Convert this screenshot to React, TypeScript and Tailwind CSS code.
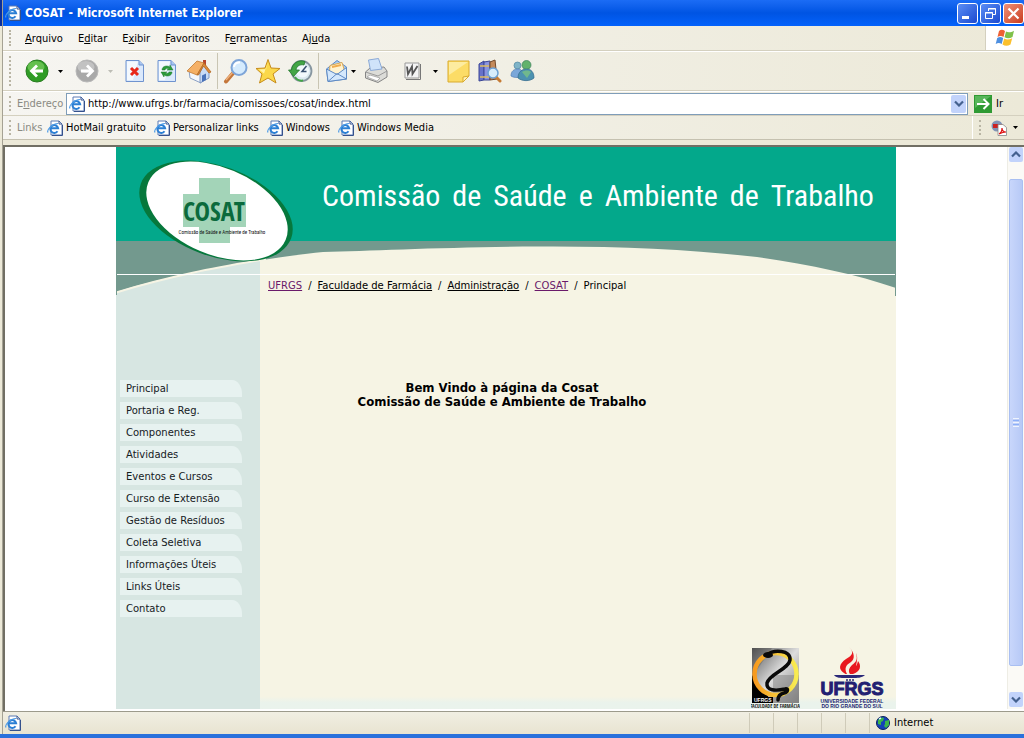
import React from "react";

const menus = [
  ["", "A", "rquivo"],
  ["E", "d", "itar"],
  ["E", "x", "ibir"],
  ["", "F", "avoritos"],
  ["F", "e", "rramentas"],
  ["Aj", "u", "da"],
];

const bookmarks = ["HotMail gratuito", "Personalizar links", "Windows", "Windows Media"];

const sections = [
  "Principal",
  "Portaria e Reg.",
  "Componentes",
  "Atividades",
  "Eventos e Cursos",
  "Curso de Extensão",
  "Gestão de Resíduos",
  "Coleta Seletiva",
  "Informações Úteis",
  "Links Úteis",
  "Contato",
];

function IePage() {
  return (
    <svg width="16" height="16" viewBox="0 0 16 16" className="shrink-0">
      <path d="M4 1h8l3 3v11H4z" fill="#fff" stroke="#5b7bb5" />
      <path d="M12 1v3h3M15.5 5v10.5H5" fill="none" stroke="#35518c" />
      <path d="M10.5 11.2a3.9 3.9 0 1 1 .6-3H4" fill="none" stroke="#2b7fd4" strokeWidth="2" />
      <path d="M1 12.500C-.5 10 5 3.500 11 3.500" fill="none" stroke="#4d9be6" strokeWidth="1.200" />
    </svg>
  );
}

function Grip() {
  return <span className="mx-1.5 w-0.5 shrink-0 self-stretch my-1 border-l-2 border-dotted border-[#b9b5a4]" />;
}

function Caret({ color = "#000" }: { color?: string }) {
  return (
    <svg width="5" height="3" viewBox="0 0 5 3">
      <path d="M0 0h5L2.500 3z" fill={color} />
    </svg>
  );
}

function Chevron({ up = false }: { up?: boolean }) {
  return (
    <svg width="10" height="7" viewBox="0 0 10 7">
      <path d={up ? "M1 5.500 5 1.500l4 4" : "M1 1.500l4 4 4-4"} fill="none" stroke="#44618f" strokeWidth="2.200" />
    </svg>
  );
}

function RoundArrow({ back = false }: { back?: boolean }) {
  return (
    <svg width="24" height="24" viewBox="0 0 24 24">
      <circle cx="12" cy="12" r="11" fill={back ? "#2f9c25" : "#a9a9a9"} stroke={back ? "#2a7d22" : "#b9b9b9"} />
      <ellipse cx="11" cy="8" rx="8.500" ry="6" fill={back ? "#7ad05f" : "#cdcdcd"} opacity=".7" />
      <path
        d={back ? "M18 12H7M12 6.500 6.500 12l5.500 5.500" : "M6 12h11M12 6.500l5.500 5.500-5.500 5.500"}
        fill="none"
        stroke="#fff"
        strokeWidth="2.800"
      />
    </svg>
  );
}

function Sheet({ children }: { children: React.ReactNode }) {
  return (
    <svg width="22" height="24" viewBox="0 0 22 24">
      <path d="M2 1.500h13l4.500 4.500v16.500H2z" fill="#dbe9fc" stroke="#6f93cf" />
      <path d="M3 2.500h11L9 21H3z" fill="#fff" opacity=".7" />
      <path d="M15 1.500V6h4.500" fill="#a9c6f2" stroke="#6f93cf" />
      {children}
    </svg>
  );
}

function HomeIcon() {
  return (
    <svg width="26" height="26" viewBox="0 0 26 26">
      <path d="M17 2h3v7h-3z" fill="#b8442c" />
      <path d="M3 12 11 6l4 8v11L4 20z" fill="#f4f7fd" stroke="#8ba0c4" />
      <path d="M14 14v11l9-5v-8l-5-5z" fill="#c9dbf5" stroke="#7f98c4" />
      <path d="M1 13 11 3l7 2-7 12z" fill="#f5b066" stroke="#c27a32" strokeWidth=".8" />
      <path d="M18 5l7 9-2 1-5.500-7-5 9-1.500 0z" fill="#dd8a3a" stroke="#b36a25" strokeWidth=".8" />
      <path d="M16 17.500l4-2V22l-4 2z" fill="#4a72b8" />
    </svg>
  );
}

function SearchIcon() {
  return (
    <svg width="26" height="26" viewBox="0 0 26 26">
      <path d="M3 23.500 11 14" stroke="#c4763a" strokeWidth="4" strokeLinecap="round" />
      <path d="M3 22 10 14" stroke="#efb27c" strokeWidth="1.300" />
      <circle cx="16" cy="9.500" r="7.500" fill="#d5ebfd" stroke="#7ea5d8" strokeWidth="2" />
      <path d="M11 9a5 5 0 0 1 6-4.500" fill="none" stroke="#fff" strokeWidth="2" />
    </svg>
  );
}

function StarIcon() {
  return (
    <svg width="26" height="26" viewBox="0 0 26 26">
      <path
        d="M13 1.500 16 10l9 .5-7 5.500 3 9-8-5-8.500 5L7 16 1 10.500 10 10z"
        fill="#fbd84a"
        stroke="#c78c1a"
        strokeLinejoin="round"
      />
      <path d="M13 4l-2 7-7 .5 5 4z" fill="#fff3a8" />
    </svg>
  );
}

function HistoryIcon() {
  return (
    <svg width="26" height="26" viewBox="0 0 26 26">
      <circle cx="14.500" cy="13" r="10" fill="#dbe9f0" stroke="#8796a0" strokeWidth="1.800" />
      <circle cx="15.500" cy="13" r="6.500" fill="#f2f9fd" />
      <path d="M19.500 8 15 13.500h4.500" fill="none" stroke="#38506f" strokeWidth="1.500" />
      <path d="M18 3.500C11 1 5 6 4.500 12H1.500l5 6.500 6-6.500H9c.5-4 4-6 8-5z" fill="#43a647" stroke="#25772f" strokeWidth=".8" />
      <path d="M8 19c2 3 5 4 8 3.500" fill="none" stroke="#43a647" strokeWidth="2" />
    </svg>
  );
}

function MailIcon() {
  return (
    <svg width="24" height="24" viewBox="0 0 24 24">
      <path d="M1.500 10 12 1.500 21.500 8v12L3 22.500z" fill="#a9cdf2" stroke="#5e8ac4" />
      <path d="M5 6.500l12-3 2.500 8-8 5-7-4z" fill="#fff3d0" stroke="#dca850" />
      <path d="M7 8l9-2" stroke="#f0ad4e" strokeWidth="2" />
      <path d="M1.500 10 12 15.500l9.500-7V20L3 22.500z" fill="#d4e8fc" stroke="#5e8ac4" />
      <path d="M3 22.500l9-8 9.500 5.500" fill="none" stroke="#5e8ac4" />
    </svg>
  );
}

function PrinterIcon() {
  return (
    <svg width="24" height="26" viewBox="0 0 24 26">
      <path d="M1.500 14 6 10l14-1 3 4v6l-9 5.500L1.500 20z" fill="#dcdcd8" stroke="#858585" />
      <path d="M6.500 12.500 4.500 2l10-1.500L18 11z" fill="#cfe3fa" stroke="#8aa9d6" />
      <path d="M1.500 14 14 18l9-5" fill="none" stroke="#9a9a9a" />
      <path d="M3 19l3-2 10 3-3 3z" fill="#fff" stroke="#999" strokeWidth=".7" />
    </svg>
  );
}

function WordIcon() {
  return (
    <svg width="17" height="18" viewBox="0 0 17 18">
      <path d="M1 1h14v15H1z" fill="#f4f4f4" stroke="#999" />
      <path d="M16.500 2v15.500H2" fill="none" stroke="#777" />
      <path d="M3 4.500l1 7.500 4-7.500.5 7.500 5-8" fill="none" stroke="#555" strokeWidth="1.800" />
    </svg>
  );
}

function NoteIcon() {
  return (
    <svg width="23" height="23" viewBox="0 0 23 23">
      <path d="M1 1h21v15l-6 6H1z" fill="#fcdc66" stroke="#d9ab2e" />
      <path d="M2 2h19L2 15z" fill="#fdeca0" />
      <path d="M16 22v-5l6-1z" fill="#fff2b8" stroke="#d9ab2e" />
    </svg>
  );
}

function ResearchIcon() {
  return (
    <svg width="24" height="24" viewBox="0 0 24 24">
      <path d="M1 5l5-3v19l-5 1z" fill="#6772c9" stroke="#3c4796" />
      <path d="M6 3l6-1v19H6z" fill="#8a95e0" stroke="#3c4796" />
      <path d="M12 3l5-2 2 19-7 1z" fill="#c48a5a" stroke="#754a2b" />
      <path d="M2 7h9M2 18h9" stroke="#e0bd60" strokeWidth="1.500" />
      <path d="M18 18l4 4" stroke="#c67b34" strokeWidth="3" strokeLinecap="round" />
      <circle cx="15" cy="14" r="5" fill="#d7edfc" stroke="#6ba0d4" strokeWidth="1.500" />
    </svg>
  );
}

function MessengerIcon() {
  return (
    <svg width="25" height="22" viewBox="0 0 25 22">
      <circle cx="7.500" cy="5.500" r="3.500" fill="#7fb4c8" stroke="#4f87a0" strokeWidth=".7" />
      <path d="M1 16c0-5 3-7 7-7 3 0 5 2 5 7-3 2-9 2-12 0z" fill="#7aa7d9" stroke="#5580b5" strokeWidth=".7" />
      <circle cx="16.500" cy="5" r="4.500" fill="#62b26c" stroke="#3d7f5c" strokeWidth=".7" />
      <path d="M8 18c0-6 4-9 8.500-9s7.500 3 7.500 9c-4 3.500-12 3.500-16 0z" fill="#4c92b0" stroke="#32698c" strokeWidth=".7" />
      <path d="M12 12c3-2 7-2 9 0l-4 6z" fill="#79c285" opacity=".8" />
    </svg>
  );
}

function WindowsFlag() {
  return (
    <svg width="20" height="18" viewBox="0 0 20 18">
      <path d="M4 2c2-2 4-1.500 6 0L8.500 8c-2-1.500-4-1.500-6 0z" fill="#ee6034" />
      <path d="M11 2.500c2 1.200 5 1 8-.8L17.500 8c-3 1.500-5 1.500-8 .3z" fill="#7fc14b" />
      <path d="M2.200 9c2-1.500 4-1.500 6 0l-1.500 6c-2-1.500-4-1.500-6 0z" fill="#4d8fe0" />
      <path d="M9.200 9.500c2.500 1.500 5 1.200 8-.3L15.500 15.500c-3 1.700-5.500 1.500-8 0z" fill="#fbc02d" />
    </svg>
  );
}

function PdfIcon() {
  return (
    <svg width="16" height="16" viewBox="0 0 16 16">
      <circle cx="6" cy="6" r="5.500" fill="#8193b5" />
      <path d="M2 4h9v4H2z" fill="#c22" />
      <path d="M7 4.500h5l3.500 3v8H7z" fill="#fff" stroke="#888" strokeWidth=".8" />
      <path d="M8 14c2-1 3-4 3-6 0 3 2 4 4 4-3 0-5 1-7 2z" fill="none" stroke="#d11" strokeWidth="1.200" />
    </svg>
  );
}

function Globe() {
  return (
    <svg width="14" height="14" viewBox="0 0 14 14">
      <circle cx="7" cy="7" r="6.500" fill="#1440b8" stroke="#0a1f5c" />
      <path d="M2 4c2-3 5-3 6-2L7 5 5 6v3L2 8zM9 5l4-1v5l-3 3-2-2 1-2z" fill="#3bb54a" />
      <path d="M3 3l2-1" stroke="#d9f2ff" strokeWidth="1.500" />
    </svg>
  );
}

function ToolButton({ label, children }: { label: string; children: React.ReactNode }) {
  return (
    <button type="button" aria-label={label} className="flex h-8 w-8 shrink-0 items-center justify-center">
      {children}
    </button>
  );
}

function DropButton({ label, color }: { label: string; color?: string }) {
  return (
    <button type="button" aria-label={label} className="flex h-8 w-3.5 shrink-0 items-center justify-center">
      <Caret color={color} />
    </button>
  );
}

function TitleBar() {
  const box = "flex h-[21px] w-[21px] items-center justify-center rounded-[3px] border border-white";
  return (
    <header className="flex h-[26px] items-center bg-linear-to-b from-[#1b6cf5] via-[#0054e3] to-[#0462fb] pl-0.5">
      <IePage />
      <h1 className="ml-1 flex-1 text-[12px] font-bold text-white">COSAT - Microsoft Internet Explorer</h1>
      <div className="flex gap-0.5">
        <button type="button" aria-label="Minimizar" className={`${box} bg-linear-to-br from-[#5c8df5] to-[#1c48cf]`}>
          <svg width="13" height="13" viewBox="0 0 13 13">
            <path d="M1 9h7v3H1z" fill="#fff" />
          </svg>
        </button>
        <button type="button" aria-label="Restaurar" className={`${box} bg-linear-to-br from-[#5c8df5] to-[#1c48cf]`}>
          <svg width="13" height="13" viewBox="0 0 13 13" fill="none" stroke="#fff">
            <path d="M4.500 4V1.500h7v6H9M4 2h8" />
            <path d="M1.500 5.500h7v6h-7zM1 6h8" />
          </svg>
        </button>
        <button type="button" aria-label="Fechar" className={`${box} bg-linear-to-br from-[#ee9077] to-[#c9391a]`}>
          <svg width="13" height="13" viewBox="0 0 13 13">
            <path d="M1.500 1.500l10 10M11.500 1.500l-10 10" stroke="#fff" strokeWidth="2.200" />
          </svg>
        </button>
      </div>
    </header>
  );
}

function MenuBar() {
  return (
    <div className="flex h-[25px] items-center border-b border-[#d4d0bf] bg-linear-to-r from-[#f6f5f1] to-[#ece9d8]">
      <Grip />
      <nav className="ml-2 flex flex-1 gap-[15px] pt-0.5">
        {menus.map(([a, b, c]) => (
          <button type="button" key={a + b + c}>
            {a}
            <span className="underline">{b}</span>
            {c}
          </button>
        ))}
      </nav>
      <div className="flex w-[39px] items-center justify-center self-stretch border-l border-[#d4d0bf] bg-white">
        <WindowsFlag />
      </div>
    </div>
  );
}

function ToolBar() {
  return (
    <div className="flex h-10 items-center border-t border-b border-t-white border-b-[#d4d0bf] bg-linear-to-r from-[#f6f5f1] to-[#ece9d8]">
      <Grip />
      <div className="ml-1 flex items-center">
        <ToolButton label="Voltar">
          <RoundArrow back />
        </ToolButton>
        <DropButton label="Histórico de voltar" />
        <span className="w-1" />
        <ToolButton label="Avançar">
          <RoundArrow />
        </ToolButton>
        <DropButton label="Histórico de avançar" color="#bdbdb5" />
        <span className="w-0.5" />
        <ToolButton label="Parar">
          <Sheet>
            <path d="M7 9l7 7M14 9l-7 7" stroke="#e8281b" strokeWidth="3" />
          </Sheet>
        </ToolButton>
        <ToolButton label="Atualizar">
          <Sheet>
            <path
              d="M6 11c0-4 5-5 8-3V6l3 5h-6l2-1c-2-1-4 0-4 1zM16 13c0 4-5 5-8 3v2l-3-5h6l-2 1c2 1 4 0 4-1z"
              fill="#2b9a3a"
              stroke="#1d7a2b"
              strokeWidth=".5"
            />
          </Sheet>
        </ToolButton>
        <ToolButton label="Página inicial">
          <HomeIcon />
        </ToolButton>
        <span className="mx-0.5 h-9 w-px bg-[#c9c5b3]" />
        <ToolButton label="Pesquisar">
          <SearchIcon />
        </ToolButton>
        <ToolButton label="Favoritos">
          <StarIcon />
        </ToolButton>
        <ToolButton label="Histórico">
          <HistoryIcon />
        </ToolButton>
        <span className="mx-0.5 h-9 w-px bg-[#c9c5b3]" />
        <button type="button" aria-label="Correio" className="flex h-8 items-center gap-0.5 pl-1">
          <MailIcon />
          <Caret />
        </button>
        <span className="w-1" />
        <ToolButton label="Imprimir">
          <PrinterIcon />
        </ToolButton>
        <span className="w-1" />
        <ToolButton label="Editar com o Word">
          <WordIcon />
        </ToolButton>
        <DropButton label="Outros editores" />
        <ToolButton label="Discutir">
          <NoteIcon />
        </ToolButton>
        <ToolButton label="Referências">
          <ResearchIcon />
        </ToolButton>
        <ToolButton label="Messenger">
          <MessengerIcon />
        </ToolButton>
      </div>
    </div>
  );
}

function AddressBar() {
  return (
    <div className="flex h-6 items-center border-t border-white bg-linear-to-r from-[#f6f5f1] to-[#ece9d8]">
      <Grip />
      <label htmlFor="address" className="w-[49px] text-[#8a8a82]">
        E<span className="underline">n</span>dereço
      </label>
      <div className="flex h-[22px] flex-1 items-center border border-[#7f9db9] bg-white pl-0.5">
        <IePage />
        <input
          id="address"
          className="ml-[3px] min-w-0 flex-1 outline-none"
          defaultValue="http://www.ufrgs.br/farmacia/comissoes/cosat/index.html"
        />
        <button
          type="button"
          aria-label="Endereços visitados"
          className="m-px flex h-[18px] w-[15px] items-center justify-center rounded-xs bg-[#c2d3fb]"
        >
          <Chevron />
        </button>
      </div>
      <button type="button" className="ml-1.5 flex w-[50px] items-center gap-1">
        <svg width="18" height="18" viewBox="0 0 18 18">
          <path d="M0 0h18v18H0z" fill="#2f9a33" />
          <path d="M1 1h16L1 13z" fill="#58b65a" />
          <path d="M3 9h11M9.500 4l5 5-5 5" fill="none" stroke="#fff" strokeWidth="2" />
        </svg>
        Ir
      </button>
    </div>
  );
}

function LinksBar() {
  return (
    <div className="flex h-[25px] items-center border-t border-b border-t-[#d4d0bf] border-b-[#c5c1b0] bg-linear-to-r from-[#f6f5f1] to-[#ece9d8]">
      <Grip />
      <span className="w-[30px] text-[#8a8a82]">Links</span>
      <div className="flex flex-1 gap-2">
        {bookmarks.map((b) => (
          <a href="#" key={b} className="flex items-center gap-[3px] whitespace-nowrap">
            <IePage />
            {b}
          </a>
        ))}
      </div>
      <div className="flex items-center self-stretch border-l border-white">
        <Grip />
        <button type="button" aria-label="Converter em PDF" className="flex w-[37px] items-center gap-1.5 pl-1">
          <PdfIcon />
          <Caret />
        </button>
      </div>
    </div>
  );
}

function BannerArt() {
  return (
    <svg
      viewBox="0 0 780 150"
      preserveAspectRatio="none"
      className="absolute top-0 left-0 h-[150px] w-full"
      aria-hidden="true"
    >
      <path d="M0 0h780v94H0z" fill="#03a88b" />
      <path d="M144 94h636v30H144z" fill="#f6f4e4" />
      <path
        d="M0 94h780v47C740 127 690 117 641 110 570 102 500 99 421 99.500 330 100 255 104 207 105 150 111 60 126 0 145z"
        fill="#73998e"
      />
      <path d="M0 145.500C60 127 110 119 150 112" fill="none" stroke="#f6f4e4" strokeWidth="2" />
      <path d="M0 127.500h780" stroke="#fff" />
      <path d="M.5 127v21M779.500 127v22" stroke="#73998e" />
    </svg>
  );
}

function CosatLogo() {
  return (
    <svg width="156" height="106" viewBox="0 0 156 106" className="shrink-0" role="img" aria-label="COSAT">
      <ellipse cx="78" cy="53" rx="80" ry="45" transform="rotate(20 78 53)" fill="#06783c" />
      <ellipse cx="79" cy="53" rx="74.500" ry="43.500" transform="rotate(22.800 79 53)" fill="#fff" />
      <path d="M61 20h31v16h16v33H92v16H61V69H45V36h16z" fill="#a3d4b8" />
      <text
        x="76"
        y="63"
        textAnchor="middle"
        fill="#0b6a3c"
        className="font-['Open_Sans_Condensed','Roboto_Condensed',sans-serif] text-[26px]"
      >
        COSAT
      </text>
      <text x="84" y="76" textAnchor="middle" fill="#111" className="font-['Roboto_Condensed',sans-serif] text-[5px]">
        Comissão de Saúde e Ambiente de Trabalho
      </text>
    </svg>
  );
}

function PharmacyLogo() {
  return (
    <svg width="49" height="62" viewBox="0 0 49 62" role="img" aria-label="UFRGS Faculdade de Farmácia">
      <defs>
        <linearGradient id="metal" x1="0" y1="0" x2="1" y2="1">
          <stop offset="0" stopColor="#555" />
          <stop offset=".5" stopColor="#ddd" />
          <stop offset="1" stopColor="#777" />
        </linearGradient>
        <linearGradient id="ring" x1="0" x2="1">
          <stop offset="0" stopColor="#f79a1e" />
          <stop offset="1" stopColor="#f8ec52" />
        </linearGradient>
      </defs>
      <path d="M1 1h47v55H1z" fill="url(#metal)" />
      <path d="M22 28h26v28H22z" fill="#888" opacity=".55" />
      <path d="M1 28v28h21z" fill="#000" />
      <path d="M1 1h20L1 30z" fill="#444" opacity=".3" />
      <circle cx="24.500" cy="27" r="21" fill="none" stroke="url(#ring)" strokeWidth="4.500" />
      <path
        d="M16 8c7-6 24-5 23 5-1 9-21 14-23 23-1 8 9 8 18 6 4-1 3 3-1 4-4 1-6 3-6 7"
        fill="none"
        stroke="#0a0a0a"
        strokeWidth="3.500"
        strokeLinecap="round"
      />
      <ellipse cx="17" cy="8" rx="5" ry="3" fill="#0a0a0a" />
      <path d="M1 50h21v6H1z" fill="#000" />
      <text x="3" y="55" fill="#fff" className="font-['Liberation_Sans',sans-serif] text-[5px] font-bold">
        UFRGS
      </text>
      <text
        x="24"
        y="61"
        textAnchor="middle"
        fill="#222"
        className="font-['Open_Sans_Condensed','Roboto_Condensed',sans-serif] text-[5px]"
      >
        FACULDADE DE FARMÁCIA
      </text>
    </svg>
  );
}

function UfrgsLogo() {
  return (
    <svg width="70" height="63" viewBox="0 0 70 63" role="img" aria-label="Universidade Federal do Rio Grande do Sul">
      <path
        d="M31 1c5 5 4 8-3 12-7 5-8 10-2 14 1 1 2 1 3 1-3-6-1-9 4-12 4-3 4-9-2-15z"
        fill="#e8191f"
      />
      <path d="M38 7c2 7 0 9-4 12-3 3-4 6-2 9h3c7-2 9-8 5-13-1 3-1 4-2 5 1-5 2-9 0-13z" fill="#e8191f" />
      <path d="M16 29h31c-3 3-9 3-11 3h-9c-4 0-9 0-11-3z" fill="#2a2878" />
      <path d="M28 34h2M31 34h2M34 34h2" stroke="#2a2878" strokeWidth="1.500" />
      <text
        x="34"
        y="49"
        textAnchor="middle"
        fill="#221f72"
        stroke="#221f72"
        className="font-['Liberation_Sans',sans-serif] text-[18px] font-bold"
      >
        UFRGS
      </text>
      <text x="34" y="57" textAnchor="middle" fill="#221f72" className="font-['Liberation_Sans',sans-serif] text-[5px] font-bold">
        UNIVERSIDADE FEDERAL
      </text>
      <text x="34" y="62" textAnchor="middle" fill="#221f72" className="font-['Liberation_Sans',sans-serif] text-[5px] font-bold">
        DO RIO GRANDE DO SUL
      </text>
    </svg>
  );
}

function CosatPage() {
  return (
    <div className="relative mx-auto flex w-full max-w-[780px] flex-col font-['DejaVu_Sans',Verdana,sans-serif]">
      <BannerArt />
      <header className="relative flex h-32 items-start pt-[11px] pl-[22px]">
        <CosatLogo />
        <h2 className="mt-4 ml-7 flex gap-3 font-['Roboto_Condensed',sans-serif] text-[30px] leading-[44px] whitespace-nowrap text-white">
          <span>Comissão</span> <span>de</span> <span>Saúde</span> <span>e</span> <span>Ambiente</span>{" "}
          <span>de</span> <span>Trabalho</span>
        </h2>
      </header>
      <div className="-mt-[15px] flex flex-1">
        <nav className="w-36 shrink-0 bg-[#d7e6e2] pt-[120px] pl-1">
          <ul className="flex flex-col gap-[5px]">
            {sections.map((s) => (
              <li key={s}>
                <a
                  href="#"
                  className="block h-[17px] w-[122px] rounded-tr-[10px_14px] bg-[#e7f2f0] pl-1.5 text-[10px] leading-[17px] whitespace-nowrap text-[#16201e]"
                >
                  {s}
                </a>
              </li>
            ))}
          </ul>
        </nav>
        <main className="flex min-w-0 flex-1 flex-col bg-[#f6f4e4]">
          <div className="relative mt-[18px] ml-2 flex gap-1.5 text-[10px] leading-4">
            <a href="#" className="text-[#6a1a6a] underline">UFRGS</a>
            <span>/</span>
            <a href="#" className="underline">Faculdade de Farmácia</a>
            <span>/</span>
            <a href="#" className="underline">Administração</a>
            <span>/</span>
            <a href="#" className="text-[#6a1a6a] underline">COSAT</a>
            <span>/</span>
            <span>Principal</span>
          </div>
          <p className="mt-[87px] w-[484px] text-center font-['DejaVu_Sans_Condensed',sans-serif] text-[13px] leading-[14px] font-bold">
            Bem Vindo à página da Cosat
            <br />
            Comissão de Saúde e Ambiente de Trabalho
          </p>
          <div className="mt-auto flex items-end justify-end gap-[18px] bg-linear-to-t from-[#eaf3ec] from-10% to-transparent to-20% pr-2">
            <PharmacyLogo />
            <UfrgsLogo />
          </div>
        </main>
      </div>
    </div>
  );
}

function ScrollBar() {
  return (
    <div className="flex w-[17px] shrink-0 flex-col items-center border-l border-[#eeede5] bg-[#fbfaf6]">
      <button
        type="button"
        aria-label="Rolar para cima"
        className="flex h-[15px] w-[14px] items-center justify-center rounded-xs bg-[#c2d3fb]"
      >
        <Chevron up />
      </button>
      <div className="mt-[17px] mb-[26px] flex w-[14px] flex-1 flex-col items-center justify-center gap-px rounded-xs border border-[#a9bff2] bg-linear-to-r from-[#c8d6fb] to-[#b7c9f6]">
        <span className="h-px w-1.5 bg-[#eef4fe]" />
        <span className="h-px w-1.5 bg-[#8cb0f8]" />
        <span className="h-px w-1.5 bg-[#eef4fe]" />
        <span className="h-px w-1.5 bg-[#8cb0f8]" />
        <span className="h-px w-1.5 bg-[#eef4fe]" />
      </div>
      <button
        type="button"
        aria-label="Rolar para baixo"
        className="mb-0.5 flex h-[15px] w-[14px] items-center justify-center rounded-xs bg-[#c2d3fb]"
      >
        <Chevron />
      </button>
    </div>
  );
}

function StatusBar() {
  return (
    <footer className="flex h-[23px] items-center border-t border-[#9c9a8c] bg-linear-to-b from-[#f1efe3] to-[#e8e4d1] pl-0.5">
      <IePage />
      <div className="flex-1" />
      {[1, 2, 3, 4, 5].map((n) => (
        <span key={n} className="h-5 w-6 border-l border-[#cfcbb9]" />
      ))}
      <div className="flex h-5 w-[155px] items-center gap-1 border-l border-[#cfcbb9] pl-1.5">
        <Globe />
        Internet
      </div>
    </footer>
  );
}

export default function App() {
  return (
    <div className="flex min-h-screen flex-col bg-[#ece9d8] font-['DejaVu_Sans_Condensed',Tahoma,sans-serif] text-[11px] leading-4 text-black">
      <div className="flex flex-1">
        <div className="w-[3px] shrink-0 border-r border-[#a5a294] bg-[#ece9d8]">
          <div className="h-[26px] bg-[#0a2f9c]" />
        </div>
        <div className="flex min-w-0 flex-1 flex-col">
          <TitleBar />
          <MenuBar />
          <ToolBar />
          <AddressBar />
          <LinksBar />
          <div className="mt-[5px] flex flex-1 border-t-2 border-l-2 border-t-[#716f64] border-l-[#716f64] bg-white pb-0.5">
            <div className="flex min-w-0 flex-1">
              <CosatPage />
            </div>
            <ScrollBar />
          </div>
          <StatusBar />
        </div>
      </div>
      <div className="h-1 bg-[#2a71dc]" />
    </div>
  );
}
